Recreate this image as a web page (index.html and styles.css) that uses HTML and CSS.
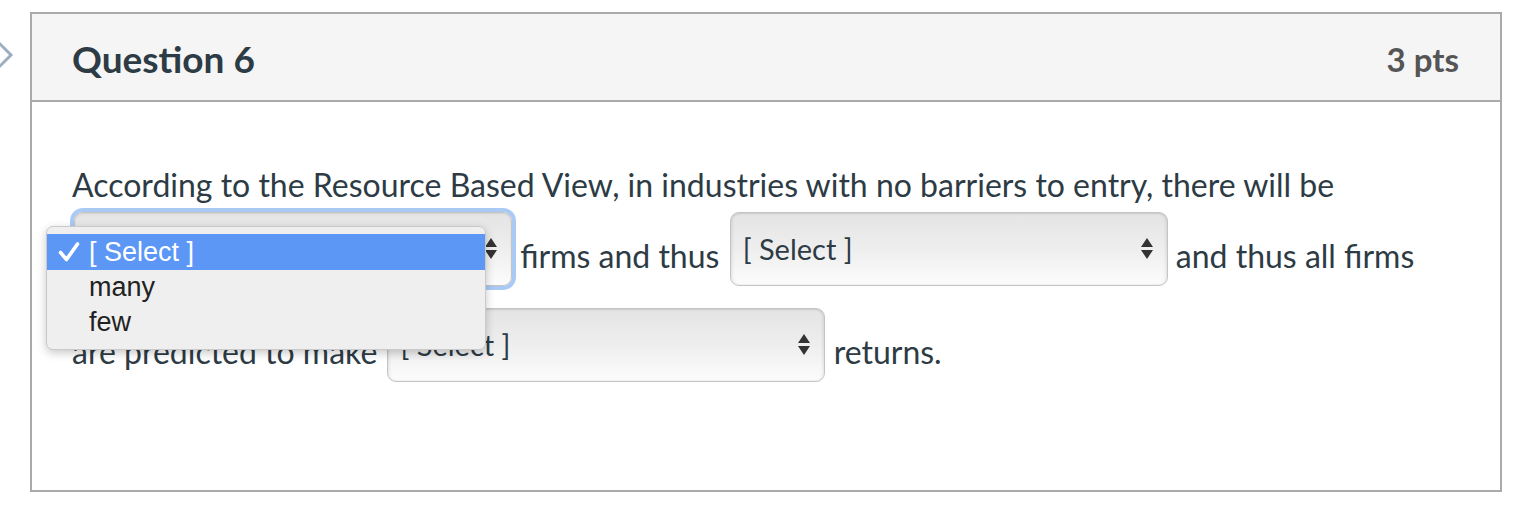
FILE: index.html
```html
<!DOCTYPE html>
<html lang="en">
<head>
<meta charset="utf-8">
<title>Question 6</title>
<link rel="stylesheet" href="styles.css">
</head>
<body>
<div class="page">
  <div class="gutter">
    <svg class="chevron" width="30" height="80" viewBox="0 0 30 80" aria-hidden="true">
      <path d="M-3 29 L11 43 L-3 57" fill="none" stroke="#9cafc1" stroke-width="3" stroke-linejoin="miter"/>
    </svg>
  </div>
  <div class="card">
    <div class="card-header">
      <h2 class="q-title">Question 6</h2>
      <span class="q-pts">3 pts</span>
    </div>
    <div class="card-body">
      <p class="q-text">According to the Resource Based View, in industries with no barriers to entry, there will be <span class="sel sel-focus"><span class="sel-text">[ Select ]</span><svg class="sel-arrows" width="12" height="21" viewBox="0 0 12 21"><path d="M6 0 L12 9 L0 9 Z M0 12 L12 12 L6 21 Z" fill="#333"/></svg></span> firms and thus <span class="sel"><span class="sel-text">[ Select ]</span><svg class="sel-arrows" width="12" height="21" viewBox="0 0 12 21"><path d="M6 0 L12 9 L0 9 Z M0 12 L12 12 L6 21 Z" fill="#333"/></svg></span> and thus all firms are predicted to make <span class="sel"><span class="sel-text">[ Select ]</span><svg class="sel-arrows" width="12" height="21" viewBox="0 0 12 21"><path d="M6 0 L12 9 L0 9 Z M0 12 L12 12 L6 21 Z" fill="#333"/></svg></span> returns.</p>
      <ul class="popup">
        <li class="opt opt-active"><span class="check"><svg width="22" height="20" viewBox="0 0 22 20"><polyline points="2.5,10.5 8.5,17.5 19.5,2" fill="none" stroke="#ffffff" stroke-width="3.6" stroke-linecap="round" stroke-linejoin="round"/></svg></span>[ Select ]</li>
        <li class="opt"><span class="check"></span>many</li>
        <li class="opt"><span class="check"></span>few</li>
      </ul>
    </div>
  </div>
</div>
</body>
</html>
```

FILE: styles.css
```css
html, body {
  margin: 0;
  padding: 0;
  background: #ffffff;
}

body {
  font-family: Lato, "Liberation Sans", sans-serif;
  color: #2d3b45;
}

.page {
  display: flex;
  align-items: flex-start;
  padding-top: 12px;
}

.gutter {
  width: 30px;
  flex: 0 0 30px;
  overflow: hidden;
}

.chevron {
  display: block;
}

.card {
  width: 1472px;
  box-sizing: border-box;
  border: 2px solid #aaaaaa;
  background: #ffffff;
}

.card-header {
  height: 88px;
  box-sizing: border-box;
  background: #f5f5f5;
  border-bottom: 2px solid #aaaaaa;
  display: flex;
  align-items: center;
  justify-content: space-between;
  padding: 2px 41px 0 40px;
}

.q-title {
  margin: 0;
  font-size: 37px;
  font-weight: 700;
  color: #2d3b45;
}

.q-pts {
  font-size: 33px;
  font-weight: 700;
  color: #555555;
  padding-top: 2px;
}

.card-body {
  position: relative;
  padding: 62px 60px 92px 40px;
}

.q-text {
  margin: 0;
  font-size: 32px;
  line-height: 1.3;
}

.sel {
  display: inline-flex;
  align-items: center;
  justify-content: space-between;
  vertical-align: 7px;
  width: 438px;
  height: 74px;
  box-sizing: border-box;
  margin: 6px 0 16px 2px;
  padding: 0 14px 0 12px;
  border: 1px solid #c4c4c4;
  border-radius: 9px;
  background: linear-gradient(#e4e4e4, #eeeeee 50%, #fcfcfc);
  box-shadow: inset 0 1px 2px rgba(0,0,0,0.08), inset -2px 0 3px rgba(0,0,0,0.05), inset 2px 0 3px rgba(0,0,0,0.05);
  font-size: 29px;
  line-height: 1;
  color: #2d3b45;
}

.sel-focus {
  box-shadow: 0 0 0 4px #a9caf5, inset 0 1px 2px rgba(0,0,0,0.08);
}

.sel-arrows {
  display: block;
  flex: 0 0 auto;
}

.popup {
  position: absolute;
  left: 14px;
  top: 124px;
  width: 440px;
  box-sizing: border-box;
  margin: 0;
  padding: 7px 0 9px;
  list-style: none;
  background: #efefef;
  border: 1px solid #c9c9c9;
  border-radius: 7px;
  box-shadow: 0 3px 10px rgba(0,0,0,0.22);
  font-family: "Liberation Sans", Arial, sans-serif;
  font-size: 27px;
  color: #222222;
}

.opt {
  display: flex;
  align-items: center;
  height: 35px;
  padding-left: 11px;
}

.opt-active {
  height: 36px;
  background: #5c97f6;
  color: #ffffff;
}

.check {
  display: flex;
  align-items: center;
  width: 31px;
  height: 20px;
}

.check svg {
  display: block;
}
```
